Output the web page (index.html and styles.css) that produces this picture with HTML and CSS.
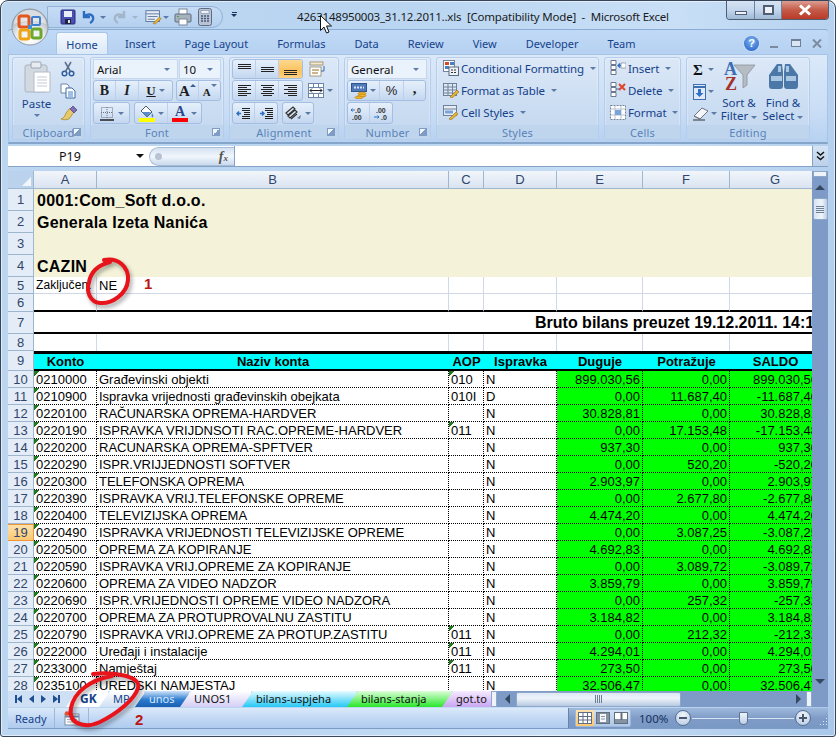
FILE: index.html
```html
<!DOCTYPE html>
<html>
<head>
    <title>4263148950003_31.12.2011..xls [Compatibility Mode] - Microsoft Excel</title>
    <link rel="stylesheet" href="styles.css">
</head>
<body>
<div class="window">
    <svg class="office-btn" width="38" height="38" viewBox="0 0 38 38">
        <defs>
            <radialGradient id="orb" cx="50%" cy="85%" r="70%"><stop offset="0" stop-color="#ffffff"/><stop offset="0.6" stop-color="#e6e8ea"/><stop offset="1" stop-color="#aab2ba"/></radialGradient>
        </defs>
        <circle cx="19" cy="19" r="18" fill="url(#orb)" stroke="#8d99a6"/>
        <path d="M3 16a16 14 0 0 1 32 0c-8-4-24-4-32 0z" fill="#ffffff" opacity=".55"/>
        <rect x="8" y="8" width="10" height="11" rx="2" fill="none" stroke="#e2571e" stroke-width="3"/>
        <rect x="21" y="9" width="8" height="8" rx="1" fill="none" stroke="#3d7fd0" stroke-width="2"/>
        <rect x="9" y="22" width="9" height="9" rx="2" fill="none" stroke="#f0a313" stroke-width="3"/>
        <rect x="21" y="21" width="9" height="9" rx="2" fill="none" stroke="#6aa82e" stroke-width="3"/>
        <rect x="17" y="17" width="4" height="4" fill="#3f8fd9"/>
    </svg>

    <div class="titlebar">
        <div class="qat">
            <svg width="16" height="16" viewBox="0 0 16 16"><rect x="1" y="1" width="14" height="14" rx="1" fill="#4a4fb5" stroke="#2b2d7a"/><rect x="4" y="2" width="8" height="6" fill="#e9edf7"/><rect x="5" y="10" width="6" height="5" fill="#20233d"/><rect x="8" y="11" width="2" height="3" fill="#dfe3ee"/></svg>
            <svg class="q-undo" width="16" height="16" viewBox="0 0 16 16"><path d="M4 2v6h6M4 8c3-4 8-3 9 0 .7 2.400-1 5-3 6" fill="none" stroke="#2a6cc0" stroke-width="2.400"/></svg>
            <span class="caret"></span>
            <svg class="q-redo" width="16" height="16" viewBox="0 0 16 16"><path d="M12 2v6H6M12 8C9 4 4 5 3 8c-.7 2.400 1 5 3 6" fill="none" stroke="#a3b5c9" stroke-width="2.400"/></svg>
            <span class="caret grey"></span>
            <svg class="q-form" width="18" height="16" viewBox="0 0 20 16"><rect x="1" y="1" width="15" height="12" fill="#e8eef6" stroke="#54709a"/><path d="M1 4.500h15M3 7.500h11M3 10.500h8" stroke="#54709a"/><path d="M9 15l7-7 2 2-7 6z" fill="#e9b533" stroke="#886a1b" stroke-width=".6"/></svg>
            <span class="caret tight"></span>
            <svg class="q-print" width="18" height="18" viewBox="0 0 18 18"><rect x="5" y="1" width="8" height="6" fill="#fff" stroke="#7a8796"/><rect x="1" y="6" width="16" height="8" rx="1" fill="#a7b2bf" stroke="#5f6c7b"/><rect x="5" y="11" width="8" height="6" fill="#fff" stroke="#7a8796"/><rect x="3" y="8" width="2" height="1" fill="#4ea33a"/></svg>
            <svg class="q-calc" width="14" height="18" viewBox="0 0 14 18"><rect x=".5" y=".5" width="13" height="17" rx="2" fill="#b9c3d4" stroke="#5f6c84"/><rect x="3" y="2.500" width="8" height="3" fill="#eef3fa" stroke="#6d7c96" stroke-width=".5"/><path d="M3 8h2M6 8h2M9 8h2M3 10.500h2M6 10.500h2M9 10.500h2M3 13h2M6 13h2M9 13h2" stroke="#47597a" stroke-width="1.300"/></svg>
        </div>
        <div class="qat-more"><span class="dash"></span><span class="caret dark"></span></div>
        <div class="title-text">4263148950003_31.12.2011..xls&nbsp; [Compatibility Mode]&nbsp; -&nbsp; Microsoft Excel</div>
        <div class="win-controls">
            <div class="wc wc-min"><span></span></div>
            <div class="wc wc-max"><span></span></div>
            <div class="wc wc-close">
                <svg width="14" height="12" viewBox="0 0 14 12"><path d="M2 1.500l10 9M12 1.500l-10 9" stroke="#fff" stroke-width="3"/></svg>
            </div>
        </div>
    </div>

    <div class="content">
        <div class="tabs">
            <div class="tab active">Home</div>
            <div class="tab">Insert</div>
            <div class="tab">Page Layout</div>
            <div class="tab">Formulas</div>
            <div class="tab">Data</div>
            <div class="tab">Review</div>
            <div class="tab">View</div>
            <div class="tab">Developer</div>
            <div class="tab">Team</div>
            <div class="tab-tools">
                <div class="help">?</div>
                <div class="doc-min"></div>
                <div class="doc-max"></div>
                <svg width="10" height="9" viewBox="0 0 10 9"><path d="M1 .5l8 8M9 .5l-8 8" stroke="#7b8a9e" stroke-width="2"/></svg>
            </div>
        </div>

        <div class="ribbon">
            <div class="group g-clipboard">
                <div class="group-body clip-body">
                    <div class="paste">
                        <svg width="28" height="32" viewBox="0 0 28 32"><rect x="2" y="4" width="22" height="27" rx="2" fill="#d3d9e1" stroke="#a9b3bf"/><rect x="8" y="1" width="10" height="6" rx="1" fill="#e8ebef" stroke="#98a3b1"/><path d="M11 11h16v20H11z" fill="#fff" stroke="#b4bcc7"/><path d="M14 16h10M14 19h10M14 22h10M14 25h10" stroke="#c3cbd6"/></svg>
                        <div class="paste-label">Paste</div>
                        <span class="caret"></span>
                    </div>
                    <div class="clip-tools">
                        <svg width="16" height="16" viewBox="0 0 16 16"><circle cx="4.500" cy="12.500" r="2.300" fill="none" stroke="#2f5e9e" stroke-width="1.500"/><circle cx="11.500" cy="12.500" r="2.300" fill="none" stroke="#2f5e9e" stroke-width="1.500"/><path d="M5.500 10.500L11 1M10.500 10.500L5 1" stroke="#5a6f8c" stroke-width="1.500"/></svg>
                        <svg width="16" height="16" viewBox="0 0 16 16"><path d="M1 1h6l2 2v7H1z" fill="#fff" stroke="#6b84a6"/><path d="M6 5h6l3 3v7H6z" fill="#fff" stroke="#3f69a3"/><path d="M8 9h5M8 11h5M8 13h5" stroke="#3f7fc9"/></svg>
                        <svg width="18" height="16" viewBox="0 0 18 16"><path d="M10 3l4 4-5 7c-3 1-6 1-8 0 3-1 4-3 5-6z" fill="#e7c96a" stroke="#a98a2d" stroke-width=".8"/><path d="M10 4l3-3 4 4-3 3z" fill="#7f6fb5" stroke="#57497f" stroke-width=".8"/></svg>
                    </div>
                </div>
                <div class="group-label">Clipboard<span class="launcher"></span></div>
            </div>

            <div class="group g-font">
                <div class="group-body rows">
                    <div class="row">
                        <div class="combo c-font">Arial<span class="caret"></span></div>
                        <div class="combo c-size">10<span class="caret"></span></div>
                    </div>
                    <div class="row r-21">
                        <div class="btns">
                            <div class="b w22 serif-b">B</div>
                            <div class="b w24 serif-i">I</div>
                            <div class="b w33 serif-u"><u>U</u><span class="caret"></span></div>
                        </div>
                        <div class="btns ml3">
                            <div class="b w23 big-a">A<i class="caret up"></i></div>
                            <div class="b w21 small-a">A<i class="caret"></i></div>
                        </div>
                    </div>
                    <div class="row r-22">
                        <div class="btns">
                            <div class="b w35">
                                <svg width="16" height="15" viewBox="0 0 16 15"><rect x="2.500" y="1.500" width="11" height="10" fill="none" stroke="#6d7685" stroke-dasharray="1 1"/><path d="M8 1v11M2 6.500h12" stroke="#6d7685" stroke-dasharray="1 1"/><path d="M1 14h14" stroke="#222" stroke-width="1.500"/></svg>
                                <span class="caret"></span>
                            </div>
                        </div>
                        <div class="btns ml4">
                            <div class="b w33">
                                <div class="swatch-icon">
                                    <svg width="16" height="13" viewBox="0 0 16 13"><path d="M7 1l6 6-5 5-6-6z" fill="#fff" stroke="#4a5a70"/><path d="M3 7h9l-4 5z" fill="#5b8bc9"/><path d="M13 8c1 2 2 3 1 4s-2 0-1-4z" fill="#4a7fc7"/></svg>
                                    <span class="bar yellow"></span>
                                </div>
                                <span class="caret"></span>
                            </div>
                            <div class="b w33">
                                <div class="swatch-icon">
                                    <span class="color-a">A</span>
                                    <span class="bar red"></span>
                                </div>
                                <span class="caret"></span>
                            </div>
                        </div>
                    </div>
                </div>
                <div class="group-label">Font<span class="launcher"></span></div>
            </div>

            <div class="group g-align">
                <div class="group-body rows">
                    <div class="row">
                        <div class="btns">
                            <div class="b w23"><svg width="15" height="13" viewBox="0 0 15 13"><path d="M1 1.500h13M1 3.500h13M1 5.500h13" stroke="#222"/></svg></div>
                            <div class="b w23"><svg width="15" height="13" viewBox="0 0 15 13"><path d="M1 4.500h13M1 6.500h13M1 8.500h13" stroke="#222"/></svg></div>
                            <div class="b w23 on"><svg width="15" height="13" viewBox="0 0 15 13"><path d="M1 7.500h13M1 9.500h13M1 11.500h13" stroke="#222"/></svg></div>
                        </div>
                        <div class="free-icon ml6"><svg width="18" height="16" viewBox="0 0 18 16"><rect x="1" y="1" width="13" height="3" fill="#f3e9cf" stroke="#8a7a52" stroke-width=".7"/><rect x="1" y="6" width="11" height="9" fill="#fff" stroke="#8a7a52" stroke-width=".7"/><path d="M3 9h7M3 12h6" stroke="#9a6a1e"/><path d="M15 5v5h-3" fill="none" stroke="#3a68a8"/></svg></div>
                    </div>
                    <div class="row r-21">
                        <div class="btns">
                            <div class="b w23"><svg width="15" height="13" viewBox="0 0 15 13"><path d="M1 1.500h13M1 3.500h9M1 5.500h13M1 7.500h9M1 9.500h13M1 11.500h9" stroke="#222"/></svg></div>
                            <div class="b w23"><svg width="15" height="13" viewBox="0 0 15 13"><path d="M1 1.500h13M3 3.500h9M1 5.500h13M3 7.500h9M1 9.500h13M3 11.500h9" stroke="#222"/></svg></div>
                            <div class="b w23"><svg width="15" height="13" viewBox="0 0 15 13"><path d="M1 1.500h13M5 3.500h9M1 5.500h13M5 7.500h9M1 9.500h13M5 11.500h9" stroke="#222"/></svg></div>
                        </div>
                        <div class="free-icon ml5">
                            <svg width="16" height="15" viewBox="0 0 16 15"><rect x=".5" y=".5" width="15" height="14" fill="#fff" stroke="#6c86a8"/><path d="M5.500 1v3M10.500 1v3M5.500 11v3M10.500 11v3M1 4.500h14M1 10.500h14" stroke="#6c86a8"/><path d="M2 7.500h12M2 7.500l2-2M2 7.500l2 2M14 7.500l-2-2M14 7.500l-2 2" stroke="#222"/></svg>
                            <span class="caret"></span>
                        </div>
                    </div>
                    <div class="row r-22">
                        <div class="btns">
                            <div class="b w22"><svg width="15" height="13" viewBox="0 0 15 13"><path d="M6 1.500h8M6 3.500h8M8 5.500h6M8 7.500h6M6 9.500h8M6 11.500h8" stroke="#222"/><path d="M5 6.500H1m2-2l-2 2 2 2" fill="none" stroke="#2d6fc3" stroke-width="1.400"/></svg></div>
                            <div class="b w22"><svg width="15" height="13" viewBox="0 0 15 13"><path d="M6 1.500h8M6 3.500h8M8 5.500h6M8 7.500h6M6 9.500h8M6 11.500h8" stroke="#222"/><path d="M1 6.500h4m-2-2l2 2-2 2" fill="none" stroke="#2d6fc3" stroke-width="1.400"/></svg></div>
                        </div>
                        <div class="btns ml4">
                            <div class="b w30">
                                <svg width="17" height="15" viewBox="0 0 17 15"><path d="M1 7l7-6 2 2-7 6zM3 10l7-6 2 2-7 6zM6 13l6-5" fill="none" stroke="#333" stroke-width="1.200"/><path d="M12 12l4-3-1 4z" fill="#6b7c93"/></svg>
                                <span class="caret"></span>
                            </div>
                        </div>
                    </div>
                </div>
                <div class="group-label">Alignment<span class="launcher"></span></div>
            </div>

            <div class="group g-number">
                <div class="group-body rows">
                    <div class="row">
                        <div class="combo c-general">General<span class="caret"></span></div>
                    </div>
                    <div class="row r-21">
                        <div class="btns">
                            <div class="b w32">
                                <svg width="16" height="16" viewBox="0 0 16 16"><rect x=".5" y=".5" width="15" height="8" fill="#4f79b8" stroke="#2f558f"/><path d="M3 4.500h10" stroke="#d5e2f4" stroke-width="2" stroke-dasharray="2 1"/><ellipse cx="11" cy="10.500" rx="4" ry="1.500" fill="#f3b72e" stroke="#a8760e" stroke-width=".6"/><ellipse cx="11" cy="12.500" rx="4" ry="1.500" fill="#f3b72e" stroke="#a8760e" stroke-width=".6"/><ellipse cx="8" cy="14.500" rx="4" ry="1.400" fill="#f3b72e" stroke="#a8760e" stroke-width=".6"/></svg>
                                <span class="caret"></span>
                            </div>
                            <div class="b w24 pct">%</div>
                            <div class="b w21 comma">,</div>
                        </div>
                    </div>
                    <div class="row r-22">
                        <div class="btns">
                            <div class="b w22"><svg width="17" height="15" viewBox="0 0 17 15"><text x="5" y="6.500" class="dec-text">.0</text><text x="2" y="14" class="dec-text">.00</text><path d="M5 4H1m1.500-1.500L1 4l1.500 1.500" fill="none" stroke="#2d6fc3"/></svg></div>
                            <div class="b w22"><svg width="17" height="15" viewBox="0 0 17 15"><text x="3" y="6.500" class="dec-text">.00</text><text x="8" y="14" class="dec-text">.0</text><path d="M1 11h5M4.500 9.500L6 11l-1.500 1.500" fill="none" stroke="#2d6fc3"/></svg></div>
                        </div>
                    </div>
                </div>
                <div class="group-label">Number<span class="launcher"></span></div>
            </div>

            <div class="group g-styles">
                <div class="group-body lines">
                    <div class="line"><svg width="16" height="16" viewBox="0 0 16 16"><rect x=".5" y=".5" width="11" height="11" fill="#fff" stroke="#75869c"/><rect x="2" y="2" width="4" height="3" fill="#d9482b"/><rect x="7" y="2" width="4" height="3" fill="#4a7fc7"/><rect x="2" y="6" width="4" height="3" fill="#4a7fc7"/><rect x="6" y="7" width="9.500" height="8.500" fill="#eef3fa" stroke="#5a6a80"/><path d="M8 10h5M8 12.500h5" stroke="#333" stroke-dasharray="2 1"/></svg>Conditional Formatting<span class="caret"></span></div>
                    <div class="line"><svg width="16" height="16" viewBox="0 0 16 16"><rect x=".5" y="1.500" width="13" height="12" fill="#dfe8f5" stroke="#6f819b"/><path d="M1 5h13M1 8h13M1 11h13M5 2v12M9.500 2v12" stroke="#6f819b"/><path d="M7 15l7-7 2 2-7 6z" fill="#e7b334" stroke="#8e6e1e" stroke-width=".6"/></svg>Format as Table<span class="caret"></span></div>
                    <div class="line"><svg width="16" height="16" viewBox="0 0 16 16"><rect x=".5" y="1.500" width="13" height="10" fill="#e5ecf6" stroke="#6f819b"/><path d="M1 5h13" stroke="#6f819b"/><rect x="2" y="6.500" width="8" height="3" fill="#79a3d9"/><path d="M6 15l7-7 2 2-7 6z" fill="#e7b334" stroke="#8e6e1e" stroke-width=".6"/></svg>Cell Styles<span class="caret"></span></div>
                </div>
                <div class="group-label center">Styles</div>
            </div>

            <div class="group g-cells">
                <div class="group-body lines">
                    <div class="line"><svg width="16" height="16" viewBox="0 0 16 16"><path d="M1 .5h5v4H1zM1 5.500h5v4H1zM1 10.500h5v4H1z" fill="#fff" stroke="#68788e"/><path d="M15 5.500H8m2-2l-2 2 2 2" fill="none" stroke="#2d6fc3" stroke-width="1.300"/><rect x="11" y="3" width="5" height="5" fill="#fff" stroke="#68788e" stroke-width=".6"/></svg>Insert<span class="caret"></span></div>
                    <div class="line"><svg width="16" height="16" viewBox="0 0 16 16"><path d="M1 .5h5v4H1zM1 5.500h5v4H1zM1 10.500h5v4H1z" fill="#fff" stroke="#68788e"/><path d="M9 2l6 6M15 2L9 8" stroke="#e0452a" stroke-width="2"/><path d="M6 7h3" stroke="#2d6fc3"/></svg>Delete<span class="caret"></span></div>
                    <div class="line"><svg width="16" height="16" viewBox="0 0 16 16"><rect x=".5" y="1.500" width="15" height="14" fill="#fff" stroke="#75869c" stroke-dasharray="2 1"/><path d="M1 5h14M1 11h14M5 2v13M11 2v13" stroke="#b5c2d2"/><rect x="5" y="6" width="6" height="5" fill="#79a3d9"/></svg>Format<span class="caret"></span></div>
                </div>
                <div class="group-label center">Cells</div>
            </div>

            <div class="group g-editing">
                <div class="group-body edit-body">
                    <div class="edit-tools">
                        <div class="et"><span class="sigma">Σ</span><span class="caret"></span></div>
                        <div class="et"><svg width="13" height="16" viewBox="0 0 13 16"><rect x=".5" y=".5" width="12" height="15" fill="#dfe9f7" stroke="#3d6fb3"/><path d="M1 3h11" stroke="#3d6fb3" stroke-width="2"/><path d="M5 5h3v4h2.500l-4 4-4-4H5z" fill="#2d72c9"/></svg><span class="caret"></span></div>
                        <div class="et"><svg width="16" height="14" viewBox="0 0 16 14"><path d="M1 9l8-8 6 3-8 8z" fill="#f4f6f9" stroke="#6b7480"/><path d="M1 9l6 3" stroke="#6b7480"/><path d="M0 13h12" stroke="#333"/></svg><span class="caret"></span></div>
                    </div>
                    <div class="big-tool t-sort">
                        <svg width="32" height="32" viewBox="0 0 32 32"><path d="M11 5h21l-8 10v10l-4 3V15z" fill="#b6bcc4" stroke="#8c929a" stroke-width=".8"/><text x="1" y="15" class="az a">A</text><text x="2" y="30" class="az z">Z</text></svg>
                        <div class="big-label">Sort &amp;<br>Filter<span class="caret"></span></div>
                    </div>
                    <div class="big-tool t-find">
                        <svg width="29" height="26" viewBox="0 0 29 26"><path d="M8 1h5l1 8v14a3 3 0 0 1-3 3H3a3 3 0 0 1-3-3V12zM21 1h-5l-1 8v14a3 3 0 0 0 3 3h8a3 3 0 0 0 3-3V12z" fill="#4b78a6"/><path d="M2 13h11v5H2zM17 13h10v5H17z" fill="#a9c6e2"/><path d="M9 3h3v6H9zM17 3h3v6h-3z" fill="#a9c6e2"/></svg>
                        <div class="big-label">Find &amp;<br>Select<span class="caret"></span></div>
                    </div>
                </div>
                <div class="group-label center">Editing</div>
            </div>
        </div>

        <div class="formula-bar">
            <div class="name-box">P19<span class="caret black"></span></div>
            <div class="fx-pill"><span class="fx-dot"></span><span class="fx">f<sub>x</sub></span></div>
            <div class="formula-input"></div>
            <div class="fx-expand">
                <svg width="9" height="10" viewBox="0 0 9 10"><path d="M1 1l3.500 3L8 1M1 5.500l3.500 3 3.500-3" fill="none" stroke="#111" stroke-width="1.500"/></svg>
            </div>
        </div>

        <div class="sheet">
            <div class="grid-wrap">
                <table class="grid">
                    <colgroup>
                        <col class="col-rh"><col class="col-a"><col class="col-b"><col class="col-c"><col class="col-d"><col class="col-e"><col class="col-f"><col class="col-g">
                    </colgroup>
                    <tr class="h18 heads">
                        <th class="corner"><span></span></th><th>A</th><th>B</th><th>C</th><th>D</th><th>E</th><th>F</th><th>G</th>
                    </tr>
                    <tr class="h22"><th class="rh">1</th><td colspan="7" class="big">0001:Com_Soft d.o.o.</td></tr>
                    <tr class="h22"><th class="rh">2</th><td colspan="7" class="big">Generala Izeta Nanića</td></tr>
                    <tr class="h22"><th class="rh">3</th><td colspan="7" class="big"></td></tr>
                    <tr class="h22"><th class="rh">4</th><td colspan="7" class="big">CAZIN</td></tr>
                    <tr class="h17 plain"><th class="rh">5</th><td class="small">Zaključen:</td><td>NE</td><td></td><td></td><td></td><td></td><td></td></tr>
                    <tr class="h18 plain thick-b"><th class="rh">6</th><td></td><td></td><td></td><td></td><td></td><td></td><td></td></tr>
                    <tr class="h22"><th class="rh">7</th><td colspan="7" class="bruto">Bruto bilans preuzet 19.12.2011. 14:15</td></tr>
                    <tr class="h17 plain no-b"><th class="rh">8</th><td></td><td></td><td></td><td></td><td></td><td></td><td></td></tr>
                    <tr class="h20 cols">
                        <th class="rh">9</th><td>Konto</td><td>Naziv konta</td><td>AOP</td><td>Ispravka</td><td>Duguje</td><td>Potražuje</td><td>SALDO</td>
                    </tr>
                    <tr class="h17"><th class="rh">10</th><td class="tag">0210000</td><td>Građevinski objekti</td><td class="tag">010</td><td>N</td><td class="num">899.030,56</td><td class="num">0,00</td><td class="num">899.030,56</td></tr>
                    <tr class="h17"><th class="rh">11</th><td class="tag">0210900</td><td>Ispravka vrijednosti građevinskih obejkata</td><td>010I</td><td>D</td><td class="num">0,00</td><td class="num">11.687,40</td><td class="num">-11.687,40</td></tr>
                    <tr class="h17"><th class="rh">12</th><td class="tag">0220100</td><td>RAČUNARSKA OPREMA-HARDVER</td><td></td><td>N</td><td class="num">30.828,81</td><td class="num">0,00</td><td class="num">30.828,81</td></tr>
                    <tr class="h17"><th class="rh">13</th><td class="tag">0220190</td><td>ISPRAVKA VRIJDNSOTI RAC.OPREME-HARDVER</td><td class="tag">011</td><td>N</td><td class="num">0,00</td><td class="num">17.153,48</td><td class="num">-17.153,48</td></tr>
                    <tr class="h17"><th class="rh">14</th><td class="tag">0220200</td><td>RACUNARSKA OPREMA-SPFTVER</td><td></td><td>N</td><td class="num">937,30</td><td class="num">0,00</td><td class="num">937,30</td></tr>
                    <tr class="h17"><th class="rh">15</th><td class="tag">0220290</td><td>ISPR.VRIJJEDNOSTI SOFTVER</td><td></td><td>N</td><td class="num">0,00</td><td class="num">520,20</td><td class="num">-520,20</td></tr>
                    <tr class="h17"><th class="rh">16</th><td class="tag">0220300</td><td>TELEFONSKA OPREMA</td><td></td><td>N</td><td class="num">2.903,97</td><td class="num">0,00</td><td class="num">2.903,97</td></tr>
                    <tr class="h17"><th class="rh">17</th><td class="tag">0220390</td><td>ISPRAVKA VRIJ.TELEFONSKE OPREME</td><td></td><td>N</td><td class="num">0,00</td><td class="num">2.677,80</td><td class="num">-2.677,80</td></tr>
                    <tr class="h17"><th class="rh">18</th><td class="tag">0220400</td><td>TELEVIZIJSKA OPREMA</td><td></td><td>N</td><td class="num">4.474,20</td><td class="num">0,00</td><td class="num">4.474,20</td></tr>
                    <tr class="h17"><th class="rh sel">19</th><td class="tag">0220490</td><td>ISPRAVKA VRIJEDNOSTI TELEVIZIJSKE OPREME</td><td></td><td>N</td><td class="num">0,00</td><td class="num">3.087,25</td><td class="num">-3.087,25</td></tr>
                    <tr class="h17"><th class="rh">20</th><td class="tag">0220500</td><td>OPREMA ZA KOPIRANJE</td><td></td><td>N</td><td class="num">4.692,83</td><td class="num">0,00</td><td class="num">4.692,83</td></tr>
                    <tr class="h17"><th class="rh">21</th><td class="tag">0220590</td><td>ISPRAVKA VRIJ.OPREME ZA KOPIRANJE</td><td></td><td>N</td><td class="num">0,00</td><td class="num">3.089,72</td><td class="num">-3.089,72</td></tr>
                    <tr class="h17"><th class="rh">22</th><td class="tag">0220600</td><td>OPREMA ZA VIDEO NADZOR</td><td></td><td>N</td><td class="num">3.859,79</td><td class="num">0,00</td><td class="num">3.859,79</td></tr>
                    <tr class="h17"><th class="rh">23</th><td class="tag">0220690</td><td>ISPR.VRIJEDNOSTI OPREME VIDEO NADZORA</td><td></td><td>N</td><td class="num">0,00</td><td class="num">257,32</td><td class="num">-257,32</td></tr>
                    <tr class="h17"><th class="rh">24</th><td class="tag">0220700</td><td>OPREMA ZA PROTUPROVALNU ZASTITU</td><td></td><td>N</td><td class="num">3.184,82</td><td class="num">0,00</td><td class="num">3.184,82</td></tr>
                    <tr class="h17"><th class="rh">25</th><td class="tag">0220790</td><td>ISPRAVKA VRIJ.OPREME ZA PROTUP.ZASTITU</td><td class="tag">011</td><td>N</td><td class="num">0,00</td><td class="num">212,32</td><td class="num">-212,32</td></tr>
                    <tr class="h17"><th class="rh">26</th><td class="tag">0222000</td><td>Uređaji i instalacije</td><td class="tag">011</td><td>N</td><td class="num">4.294,01</td><td class="num">0,00</td><td class="num">4.294,01</td></tr>
                    <tr class="h17"><th class="rh">27</th><td class="tag">0233000</td><td>Namještaj</td><td class="tag">011</td><td>N</td><td class="num">273,50</td><td class="num">0,00</td><td class="num">273,50</td></tr>
                    <tr class="h17"><th class="rh">28</th><td class="tag">0235100</td><td>UREDSKI NAMJESTAJ</td><td></td><td>N</td><td class="num">32.506,47</td><td class="num">0,00</td><td class="num">32.506,47</td></tr>
                </table>
            </div>
            <div class="vscroll">
                <div class="split-v"></div>
                <div class="arrow-box"><span class="tri-up"></span></div>
                <div class="thumb-v"><span></span><span></span><span></span><span></span></div>
                <div class="arrow-box bottom"><span class="tri-down"></span></div>
            </div>
        </div>

        <div class="tabbar">
            <div class="sheet-nav">
                <svg width="7" height="8" viewBox="0 0 7 8"><path d="M0 0h2v8H0zM7 0v8L2 4z" fill="#1f4e93"/></svg>
                <svg width="5" height="8" viewBox="0 0 5 8"><path d="M5 0v8L0 4z" fill="#1f4e93"/></svg>
                <svg width="5" height="8" viewBox="0 0 5 8"><path d="M0 0v8l5-4z" fill="#1f4e93"/></svg>
                <svg width="7" height="8" viewBox="0 0 7 8"><path d="M5 0h2v8H5zM0 0v8l5-4z" fill="#1f4e93"/></svg>
            </div>
            <div class="sheet-tabs">
                <div class="stab s-gk">GK</div>
                <div class="stab s-mp">MP</div>
                <div class="stab s-unos">unos</div>
                <div class="stab s-unos1">UNOS1</div>
                <div class="stab s-usp">bilans-uspjeha</div>
                <div class="stab s-sta">bilans-stanja</div>
                <div class="stab s-got">got.to</div>
            </div>
            <div class="split-h"></div>
            <div class="hscroll">
                <span class="tri-left"></span>
                <div class="thumb-h"><span></span><span></span><span></span><span></span></div>
                <span class="tri-right"></span>
                <div class="split-h end"></div>
            </div>
        </div>

        <div class="status">
            <div class="st-cell ready">Ready</div>
            <div class="st-cell macro">
                <svg width="16" height="15" viewBox="0 0 16 15"><rect x="1" y="3" width="14" height="11" fill="#fff" stroke="#7d8da3"/><path d="M1 5.500h14" stroke="#6f8bb2" stroke-width="2"/><path d="M3 8.500h10M3 11h10" stroke="#a5b5c9"/><circle cx="3" cy="2.500" r="2.300" fill="#e5502e"/></svg>
            </div>
            <div class="st-right">
                <div class="views">
                    <div class="view on"><svg width="14" height="12" viewBox="0 0 14 12"><rect x=".5" y=".5" width="13" height="11" fill="#fff" stroke="#5f6f82"/><path d="M1 4.500h12M1 8h12M5 1v10M9.500 1v10" stroke="#5f6f82"/></svg></div>
                    <div class="view"><svg width="14" height="12" viewBox="0 0 14 12"><rect x=".5" y=".5" width="13" height="11" fill="#8592a2" stroke="#5f6f82"/><rect x="3.500" y="1.500" width="7" height="9" fill="#f6f8fb" stroke="#5f6f82" stroke-width=".6"/><path d="M5 4.500h4M5 7h4" stroke="#8592a2"/></svg></div>
                    <div class="view"><svg width="14" height="12" viewBox="0 0 14 12"><rect x=".5" y=".5" width="13" height="11" fill="#fff" stroke="#5f6f82"/><rect x="1" y="7" width="12" height="4" fill="#8592a2"/><path d="M7.500 1v7" stroke="#5f6f82" stroke-width="2"/></svg></div>
                </div>
                <div class="zoom-label">100%</div>
                <div class="zoom-btn"><span class="minus"></span></div>
                <div class="slider"><span class="slider-thumb"></span></div>
                <div class="zoom-btn"><span class="minus"></span><span class="plus"></span></div>
                <svg class="grip" width="10" height="10" viewBox="0 0 10 10"><path d="M8 1h1v1H8zM5 4h1v1H5zM8 4h1v1H8zM2 7h1v1H2zM5 7h1v1H5zM8 7h1v1H8z" fill="#dfe9f6"/></svg>
            </div>
        </div>
    </div>

    <svg class="marks" width="836" height="737" viewBox="0 0 836 737">
        <path class="ring" d="M104 260C118 257 129 267 128 280C127 294 112 304 100 303C90 302 86 292 89 282C91 272 98 265 110 262"/>
        <path class="ring" d="M93 674C115 671 142 677 138 688C135 699 118 713 100 722C85 729 68 724 71 708C74 692 90 680 112 676"/>
        <text x="144" y="289" class="mark-num">1</text>
        <text x="135" y="725" class="mark-num">2</text>
        <path d="M320.500 15.500v15l3.500-3.500 2.500 6 2.500-1-2.500-6h5z" fill="#fff" stroke="#111"/>
    </svg>
</div>
</body>
</html>
```

FILE: styles.css
```css
* {
    box-sizing: border-box;
}
html, body {
    margin: 0;
    padding: 0;
    background: #fff;
}
body {
    width: 836px;
    height: 737px;
    overflow: hidden;
    font-family: "Noto Sans", sans-serif;
    font-size: 11px;
    color: #15428b;
}
svg {
    display: block;
    flex: none;
}

/* window frame */
.window {
    position: relative;
    width: 836px;
    height: 737px;
    padding: 0 7px 7px;
    display: flex;
    flex-direction: column;
    border: 1px solid #36455a;
    border-radius: 8px 8px 3px 3px;
    background: linear-gradient(100deg, #bcd6f0, #b9d5f1 40%, #c8dff6 70%, #a9c8ea);
    box-shadow: inset 0 0 0 1px rgba(255, 255, 255, .55);
}
.office-btn {
    position: absolute;
    top: 7px;
    left: 10px;
    z-index: 3;
}
.titlebar {
    height: 28px;
    display: flex;
    align-items: flex-start;
    flex: none;
}
.qat {
    width: 176px;
    height: 22px;
    margin: 5px 0 0 39px;
    padding-left: 12px;
    display: flex;
    align-items: center;
    border: 1px solid #93b2d6;
    border-radius: 0 11px 11px 0;
    background: linear-gradient(#c6dcf5, #b4d0ef);
}
.q-undo { margin-left: 4px; }
.q-redo { margin-left: 6px; }
.q-form { margin-left: 7px; }
.q-print { margin-left: 5px; }
.q-calc { margin-left: 6px; }
.qat .caret { margin-left: 4px; }
.qat .caret.tight { margin-left: 0; }
.qat-more {
    width: 10px;
    margin: 11px 0 0 6px;
    display: flex;
    flex-direction: column;
    align-items: center;
    gap: 1px;
}
.dash {
    width: 5px;
    height: 1px;
    background: #1b3560;
}
.title-text {
    margin: 8px 0 0 58px;
    font-size: 11.500px;
    letter-spacing: -.2px;
    line-height: 16px;
    color: #1b1b1b;
    white-space: nowrap;
}
.win-controls {
    margin-left: auto;
    margin-right: -1px;
    display: flex;
    height: 19px;
    border: 1px solid #4f5e72;
    border-top: none;
    border-radius: 0 0 4px 4px;
    overflow: hidden;
    flex: none;
}
.wc {
    display: flex;
    align-items: center;
    justify-content: center;
    background: linear-gradient(#d6e4f3, #c3d6ec 50%, #9fb9d6);
}
.wc-min { width: 28px; border-right: 1px solid #6f829b; }
.wc-max { width: 27px; border-right: 1px solid #6f829b; }
.wc-close {
    width: 46px;
    background: linear-gradient(#dc9e92, #c45a48 50%, #bb3a28);
}
.wc-min span {
    width: 12px;
    height: 4px;
    margin-top: 6px;
    background: #eef3f9;
    border: 1px solid #4f5e72;
}
.wc-max span {
    width: 11px;
    height: 10px;
    border: 2px solid #4f5e72;
    background: #eef3f9;
}

/* ribbon */
.content {
    flex: 1;
    min-height: 0;
    display: flex;
    flex-direction: column;
}
.tabs {
    height: 25px;
    flex: none;
    padding-left: 48px;
    display: flex;
    align-items: flex-end;
    border-radius: 3px 3px 0 0;
    border-top: 1px solid #8aabd3;
    background: linear-gradient(#c0d9f6, #b6d1f1);
}
.tab {
    height: 22px;
    padding: 3px 12px 0;
    margin-right: 5px;
    line-height: 17px;
    font-size: 11px;
    white-space: nowrap;
}
.tab.active {
    width: 52px;
    padding: 3px 0 0;
    text-align: center;
    border: 1px solid #a8c6ea;
    border-bottom: none;
    border-radius: 3px 3px 0 0;
    background: linear-gradient(#f4f8fd, #dbe9f8);
}
.tab-tools {
    margin-left: auto;
    height: 22px;
    display: flex;
    align-items: center;
    gap: 11px;
    padding-right: 6px;
}
.help {
    width: 15px;
    height: 15px;
    border-radius: 50%;
    background: radial-gradient(circle at 50% 35%, #7fb5ef, #1c58c4);
    color: #fff;
    font: bold 11px/15px "Liberation Sans", sans-serif;
    text-align: center;
    box-shadow: 0 0 0 1px #c8dbf2;
}
.doc-min {
    width: 8px;
    height: 2px;
    margin-top: 7px;
    background: #7b8a9e;
}
.doc-max {
    width: 10px;
    height: 8px;
    margin-left: 2px;
    border: 1px solid #6f7f95;
    border-top-width: 2px;
    background: #d9e5f3;
}
.ribbon {
    height: 90px;
    flex: none;
    display: flex;
    gap: 5px;
    padding: 2px 0 2px 3px;
    background: linear-gradient(#dbe9f9, #c7dcf5 70%, #b6d1f1);
    border: 1px solid #a5c4e8;
    border-bottom: 2px solid #86a5cb;
}
.group {
    flex: none;
    display: flex;
    flex-direction: column;
    border: 1px solid #b5cdeb;
    border-radius: 3px;
    background: linear-gradient(#dce8f7, #cbddf2 60%, #c3d7ef);
    box-shadow: inset 0 0 0 1px rgba(255, 255, 255, .25);
}
.g-clipboard { width: 73px; }
.g-font { width: 134px; }
.g-align { width: 110px; }
.g-number { width: 87px; }
.g-styles { width: 163px; }
.g-cells { width: 77px; }
.g-editing { width: 124px; }
.group-body {
    flex: 1;
    min-height: 0;
}
.group-label {
    position: relative;
    height: 14px;
    flex: none;
    font-size: 11px;
    line-height: 16px;
    text-align: center;
    color: #5a83b8;
    background: #bfd5ee;
    letter-spacing: .2px;
}
.launcher {
    position: absolute;
    right: 3px;
    top: 3px;
    width: 8px;
    height: 8px;
    border: 1px solid #7e9cc4;
    background: linear-gradient(135deg, #eef4fb 50%, #7e9cc4 50%);
}
.caret {
    display: inline-block;
    width: 0;
    height: 0;
    flex: none;
    border-left: 3px solid transparent;
    border-right: 3px solid transparent;
    border-top: 3px solid #5b7aa6;
}
.caret.up {
    border-top: none;
    border-bottom: 3px solid #3a5f96;
}
.caret.grey { border-top-color: #a3b5c9; }
.caret.dark { border-top-color: #1b3560; }
.caret.black {
    border-left-width: 4px;
    border-right-width: 4px;
    border-top: 4px solid #111;
}

.clip-body {
    display: flex;
}
.paste {
    width: 43px;
    padding: 3px 0 0 2px;
    margin-left: 1px;
    display: flex;
    flex-direction: column;
    align-items: center;
    font-size: 11.500px;
}
.paste-label { margin-top: 4px; line-height: 14px; }
.paste .caret { margin-top: 3px; }
.clip-tools {
    padding: 3px 0 0 3px;
    display: flex;
    flex-direction: column;
    gap: 6px;
}
.rows {
    padding: 1px 2px 0;
    display: flex;
    flex-direction: column;
    gap: 1px;
}
.row {
    height: 20px;
    display: flex;
    align-items: stretch;
}
.row.r-21 { height: 21px; }
.row.r-22 { height: 22px; }
.combo {
    display: flex;
    align-items: center;
    justify-content: space-between;
    padding: 0 7px 0 3px;
    font-size: 11.500px;
    color: #111;
    border: 1px solid #c4d7ef;
    background: #eaf2fc;
}
.c-font { width: 85px; }
.c-size { width: 42px; margin-left: 1px; }
.c-general { width: 80px; }
.btns {
    display: flex;
    border: 1px solid #a3bde3;
    border-radius: 3px;
    overflow: hidden;
    background: linear-gradient(#e6f0fb, #d6e4f6 50%, #c3d7f0);
}
.b {
    display: flex;
    align-items: center;
    justify-content: center;
    gap: 3px;
    border-right: 1px solid #bcd0eb;
    color: #1c1c1c;
}
.b:last-child { border-right: none; }
.b.on { background: linear-gradient(#fdd98e, #fbc25f 60%, #fdd083); }
.w21 { width: 21px; }
.w22 { width: 22px; }
.w23 { width: 23px; }
.w24 { width: 24px; }
.w30 { width: 30px; }
.w32 { width: 32px; }
.w33 { width: 33px; }
.w35 { width: 35px; }
.ml3 { margin-left: 3px; }
.ml4 { margin-left: 4px; }
.ml5 { margin-left: 5px; }
.ml6 { margin-left: 6px; }
.serif-b {
    font: bold 14px "Liberation Serif", serif;
}
.serif-i {
    font: italic bold 14px "Liberation Serif", serif;
}
.serif-u {
    font: bold 13px "Liberation Serif", serif;
}
.big-a {
    font: bold 15px "Liberation Serif", serif;
    gap: 0;
    align-items: flex-end;
}
.small-a {
    font: bold 11px "Liberation Serif", serif;
    gap: 0;
    align-items: flex-end;
    padding-bottom: 2px;
}
.big-a .caret, .small-a .caret {
    align-self: flex-start;
    margin-top: 3px;
}
.swatch-icon {
    width: 16px;
    display: flex;
    flex-direction: column;
    align-items: center;
}
.bar {
    width: 16px;
    height: 4px;
}
.bar.yellow { background: #ffff00; }
.bar.red { background: #ff0000; }
.color-a {
    height: 13px;
    font: bold 14px/13px "Liberation Serif", serif;
    color: #2a4a8c;
}
.free-icon {
    display: flex;
    align-items: center;
    gap: 3px;
}
.pct {
    font: 13px "Liberation Sans", sans-serif;
}
.comma {
    font: bold 15px "Liberation Serif", serif;
    padding-bottom: 5px;
}
.dec-text {
    font: bold 7px "Liberation Sans", sans-serif;
    fill: #333;
}
.lines {
    padding: 2px 0 0 6px;
    display: flex;
    flex-direction: column;
    gap: 6px;
}
.g-cells .lines { padding-left: 5px; }
.line {
    height: 16px;
    display: flex;
    align-items: center;
    gap: 2px;
    font-size: 11.500px;
    letter-spacing: -.1px;
    white-space: nowrap;
}
.line .caret { margin-left: 4px; }
.edit-body {
    display: flex;
}
.edit-tools {
    width: 30px;
    padding: 3px 0 0 6px;
    display: flex;
    flex-direction: column;
    gap: 5px;
}
.et {
    height: 17px;
    display: flex;
    align-items: center;
    gap: 2px;
}
.sigma {
    width: 13px;
    font: bold 15px/16px "Liberation Serif", serif;
    color: #111;
}
.big-tool {
    width: 44px;
    padding-top: 2px;
    display: flex;
    flex-direction: column;
    align-items: center;
    text-align: center;
}
.t-find { padding-top: 5px; }
.big-label {
    font-size: 11.500px;
    line-height: 13px;
    white-space: nowrap;
}
.t-sort .big-label { margin-top: 4px; }
.t-find .big-label { margin-top: 7px; }
.big-label .caret { margin-left: 3px; vertical-align: 1px; }
.az {
    font: bold 18px "Liberation Serif", serif;
}
.az.a { fill: #3d6eb4; }
.az.z { fill: #a2322a; }

/* formula bar */
.formula-bar {
    height: 21px;
    flex: none;
    margin-top: 2px;
    display: flex;
    background: #fff;
    border-bottom: 1px solid #86a2c6;
}
.name-box {
    width: 141px;
    padding: 0 5px 0 51px;
    display: flex;
    align-items: center;
    justify-content: space-between;
    font: 12.500px "Noto Sans", sans-serif;
    color: #111;
}
.fx-pill {
    width: 85px;
    margin-top: 1px;
    padding: 0 6px 0 5px;
    display: flex;
    align-items: center;
    justify-content: space-between;
    border: 1px solid #a9bdd6;
    border-right: none;
    border-radius: 10px 0 0 10px;
    background: linear-gradient(#d5e2f1, #f1f6fc 50%, #c9d9ec);
}
.fx-dot {
    width: 7px;
    height: 7px;
    border-radius: 50%;
    background: #b7c3d2;
}
.fx {
    font: italic bold 14px "Liberation Serif", serif;
    color: #555;
}
.fx sub {
    font-size: 9px;
    vertical-align: baseline;
}
.formula-input {
    flex: 1;
    border-left: 1px solid #86a2c6;
}
.fx-expand {
    width: 16px;
    display: flex;
    align-items: center;
    justify-content: center;
    background: linear-gradient(#d5e3f4, #bcd1ea);
    border-left: 1px solid #86a2c6;
}

/* worksheet */
.sheet {
    height: 520px;
    flex: none;
    margin-top: 4px;
    display: flex;
    background: #fff;
}
.grid-wrap {
    width: 804px;
    flex: none;
    overflow: hidden;
}
.grid {
    width: 813px;
    table-layout: fixed;
    border-collapse: separate;
    border-spacing: 0;
    font: 13px/15px "Liberation Sans", sans-serif;
    color: #000;
}
.col-rh { width: 26px; }
.col-a { width: 63px; }
.col-b { width: 352px; }
.col-c { width: 35px; }
.col-d { width: 73px; }
.col-e { width: 86px; }
.col-f { width: 87px; }
.col-g { width: 91px; }
.h17 { height: 17px; }
.h18 { height: 18px; }
.h20 { height: 20px; }
.h22 { height: 22px; }
th {
    padding: 0;
    font-weight: normal;
    color: #30466b;
    text-align: center;
    border-right: 1px solid #9eb6ce;
    border-bottom: 1px solid #9eb6ce;
    background: #e4ecf7;
}
.heads th {
    background: linear-gradient(#f2f6fb, #d9e3f1);
}
.heads .corner {
    background: #bbd2ec;
    position: relative;
}
.corner span {
    position: absolute;
    right: 2px;
    bottom: 2px;
    width: 0;
    height: 0;
    border-left: 9px solid transparent;
    border-bottom: 9px solid #f2f6fb;
}
.rh.sel {
    background: linear-gradient(#fde2ad, #fbc872);
    border: 1px solid #f29536;
    border-left-width: 0;
}
td {
    padding: 0 2px;
    overflow: hidden;
    white-space: nowrap;
    vertical-align: bottom;
    border-right: 1px dotted #000;
    border-bottom: 1px dotted #000;
}
.num {
    padding-right: 2px;
    text-align: right;
    background: #00ff00;
}
.tag {
    background: linear-gradient(135deg, #1f7a1f 4px, transparent 4px) no-repeat;
}
.big, .bruto {
    border: none;
}
.big {
    padding-left: 3px;
    font: bold 16px/20px "Liberation Sans", sans-serif;
    letter-spacing: .25px;
    background: #f4f3da;
}
.plain td {
    border-right: 1px solid #d0d7e5;
    border-bottom: 1px solid #d0d7e5;
}
.plain .small {
    padding-left: 2px;
    font-size: 12px;
    letter-spacing: .1px;
}
.plain.thick-b td {
    border-bottom: 2px solid #000;
}
.plain.no-b td {
    border-bottom: none;
}
.bruto {
    padding-left: 501px;
    font: bold 16px/18px "Liberation Sans", sans-serif;
    border-bottom: 2px solid #000;
}
.cols td {
    padding: 0;
    font-weight: bold;
    text-align: center;
    vertical-align: middle;
    background: #00ffff;
    border-right: none;
    border-top: 3px solid #000;
    border-bottom: 2px solid #000;
}

/* scrollbars */
.vscroll {
    width: 16px;
    flex: none;
    display: flex;
    flex-direction: column;
    align-items: center;
    background: #7d9bc6;
}
.split-v {
    width: 14px;
    height: 6px;
    background: #eef3fa;
    border: 1px solid #8ea7c9;
}
.arrow-box {
    height: 21px;
    display: flex;
    align-items: center;
    justify-content: center;
}
.arrow-box.bottom {
    margin-top: auto;
    height: 20px;
}
.tri-up, .tri-down {
    width: 0;
    height: 0;
    border-left: 5px solid transparent;
    border-right: 5px solid transparent;
}
.tri-up { border-bottom: 5px solid #34495f; }
.tri-down { border-top: 5px solid #34495f; }
.thumb-v {
    width: 15px;
    height: 22px;
    display: flex;
    flex-direction: column;
    align-items: center;
    justify-content: center;
    gap: 1px;
    border: 1px solid #8ea7c9;
    border-radius: 2px;
    background: linear-gradient(90deg, #d6e3f2, #f0f5fb 60%, #b8cde6);
}
.thumb-v span {
    width: 8px;
    height: 1px;
    background: #6f7f93;
}
.tabbar {
    height: 16px;
    flex: none;
    display: flex;
    background: #7d9bc6;
}
.sheet-nav {
    width: 58px;
    flex: none;
    padding-left: 7px;
    display: flex;
    align-items: center;
    gap: 7px;
    background: #cfe0f4;
}
.sheet-tabs {
    width: 425px;
    flex: none;
    display: flex;
    overflow: hidden;
    background: #cfe0f4;
}
.stab {
    height: 16px;
    margin-right: -9px;
    padding: 0 4px 0 14px;
    font-size: 11px;
    line-height: 15px;
    white-space: nowrap;
    flex: none;
    color: #111;
    clip-path: polygon(0 100%, 11px 0, 100% 0, 100% 100%);
}
.s-gk {
    width: 42px;
    font-weight: bold;
    font-size: 12px;
    color: #15428b;
    background: #fff;
}
.s-mp {
    width: 45px;
    color: #15428b;
    background: linear-gradient(#fff, #cfe0f4);
}
.s-unos {
    width: 54px;
    color: #d9e9fb;
    background: linear-gradient(#cfe4fa, #2a7bd0 55%, #1a5fb0);
}
.s-unos1 {
    width: 71px;
    background: linear-gradient(#fff, #d4cdf5);
}
.s-usp {
    width: 114px;
    background: linear-gradient(#e4fbff, #25c8f5);
}
.s-sta {
    width: 104px;
    background: linear-gradient(#dcffd8, #29e62a);
}
.s-got {
    width: 60px;
    background: linear-gradient(#f6eaff, #c9a6f2);
}
.split-h {
    width: 6px;
    flex: none;
    background: #eef3fa;
    border: 1px solid #8ea7c9;
}
.hscroll {
    flex: 1;
    padding: 0 16px 0 8px;
    display: flex;
    align-items: center;
}
.tri-left, .tri-right {
    width: 0;
    height: 0;
    flex: none;
    border-top: 5px solid transparent;
    border-bottom: 5px solid transparent;
}
.tri-left { border-right: 5px solid #34495f; }
.tri-right {
    margin-left: auto;
    border-left: 5px solid #34495f;
}
.thumb-h {
    width: 165px;
    height: 15px;
    margin-left: 6px;
    display: flex;
    align-items: center;
    justify-content: center;
    gap: 1px;
    border: 1px solid #8ea7c9;
    border-radius: 2px;
    background: linear-gradient(#dce7f4, #eef3fa 40%, #b6c9e1);
}
.thumb-h span {
    width: 1px;
    height: 8px;
    background: #6f7f93;
}
.split-h.end {
    height: 16px;
    margin-left: 5px;
}

/* status bar */
.status {
    height: 21px;
    flex: none;
    margin-top: 1px;
    display: flex;
    background: linear-gradient(#dbe9f9, #c5daf5 45%, #aecbee);
    border-bottom: 1px solid #7d9bc6;
}
.st-cell {
    display: flex;
    align-items: center;
    border-right: 1px solid #9db8db;
}
.ready {
    width: 47px;
    padding-left: 7px;
    font-size: 11px;
}
.macro {
    width: 34px;
    padding-left: 9px;
}
.st-right {
    margin-left: auto;
    width: 260px;
    padding-left: 6px;
    display: flex;
    align-items: center;
    background: linear-gradient(#9eb9dc, #7f9cc7 50%, #7a98c4);
    border-left: 1px solid #6884ad;
}
.views {
    display: flex;
    height: 18px;
    border: 1px solid #9db8db;
    border-radius: 2px;
    background: linear-gradient(#cfe0f4, #aec8e8);
}
.view {
    width: 18px;
    display: flex;
    align-items: center;
    justify-content: center;
}
.view.on { background: linear-gradient(#fde2ad, #fbc872); }
.zoom-label {
    margin-left: 8px;
    width: 36px;
    font-size: 11.500px;
    color: #14315f;
}
.zoom-btn {
    position: relative;
    width: 16px;
    height: 16px;
    display: flex;
    align-items: center;
    justify-content: center;
    border-radius: 50%;
    border: 1px solid #566f94;
    background: radial-gradient(circle at 50% 30%, #f0f5fb, #b3c7e0);
    flex: none;
}
.minus {
    width: 8px;
    height: 2px;
    background: #46566e;
}
.plus {
    position: absolute;
    width: 2px;
    height: 8px;
    background: #46566e;
}
.slider {
    width: 102px;
    height: 1px;
    margin: 0 1px;
    display: flex;
    justify-content: center;
    align-items: center;
    background: #d8e4f3;
}
.slider-thumb {
    width: 9px;
    height: 13px;
    border: 1px solid #5d7396;
    border-radius: 1px 1px 4px 4px;
    background: linear-gradient(#eef3fa, #bdd0e8);
}
.grip {
    margin-left: 7px;
    margin-top: 8px;
}

/* hand-drawn marks and mouse pointer on top of the screenshot */
.marks {
    position: absolute;
    top: -1px;
    left: -1px;
    z-index: 5;
    pointer-events: none;
}
.ring {
    fill: none;
    stroke: #e8141c;
    stroke-width: 4;
    stroke-linecap: round;
    filter: drop-shadow(2px 3px 2px rgba(0, 0, 0, .35));
}
.mark-num {
    font: bold 15px "Liberation Sans", sans-serif;
    fill: #bb1616;
}
```
